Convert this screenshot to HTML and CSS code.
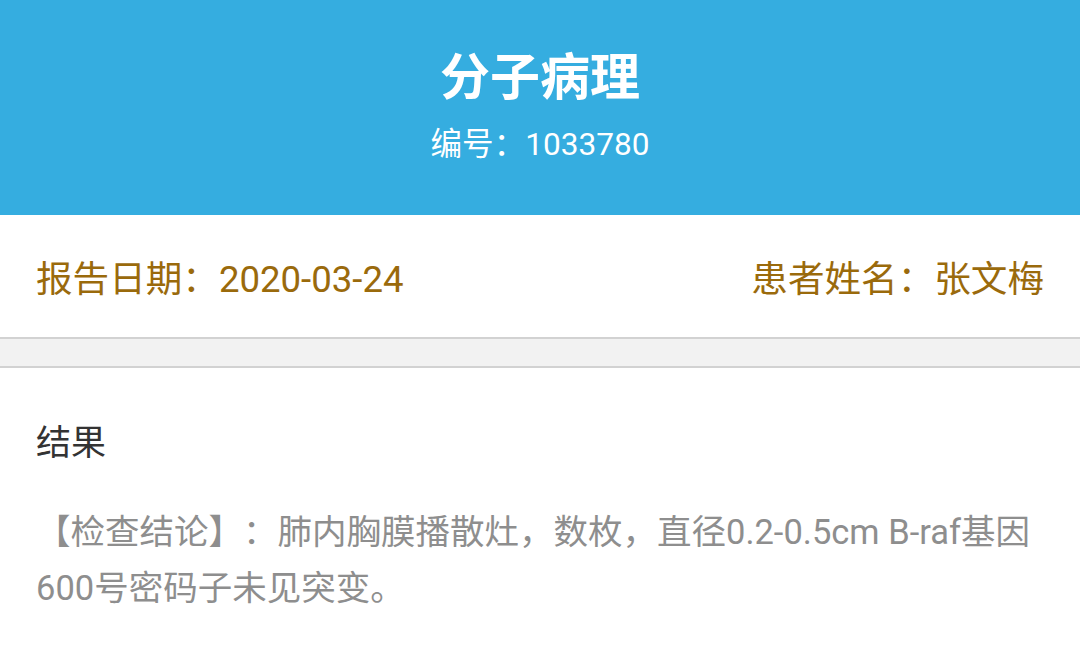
FILE: index.html
```html
<!DOCTYPE html>
<html lang="zh-CN">
<head>
<meta charset="utf-8">
<title>分子病理</title>
<link rel="stylesheet" href="styles.css">
</head>
<body>
  <header class="header">
    <h1 class="title">分子病理</h1>
    <div class="subtitle">编号：1033780</div>
  </header>
  <section class="info">
    <span class="info-item">报告日期：2020-03-24</span>
    <span class="info-item">患者姓名：张文梅</span>
  </section>
  <div class="divider"></div>
  <section class="content">
    <h2 class="section-title">结果</h2>
    <p class="result-text">【检查结论】：肺内胸膜播散灶，数枚，直径0.2-0.5cm B-raf基因600号密码子未见突变。</p>
  </section>
</body>
</html>
```

FILE: styles.css
```css
* {
  box-sizing: border-box;
}

html, body {
  margin: 0;
  padding: 0;
  background: #ffffff;
  font-family: Roboto, "Noto Sans CJK SC", sans-serif;
  text-spacing-trim: space-all;
}

.header {
  background: #35ade0;
  color: #ffffff;
  padding: 48px 0 50px;
  text-align: center;
}

.title {
  margin: 0;
  font-size: 50px;
  font-weight: 700;
  line-height: 60px;
}

.subtitle {
  margin-top: 17px;
  font-size: 31.6px;
  line-height: 40px;
}

.info {
  height: 122px;
  padding: 0 36px;
  display: flex;
  align-items: center;
  justify-content: space-between;
  color: #9a6a0c;
  font-size: 36.6px;
}

.divider {
  height: 31px;
  background: #f2f2f2;
  border-top: 2px solid #d2d2d2;
  border-bottom: 2px solid #d2d2d2;
}

.content {
  padding: 51px 36px 0;
}

.section-title {
  margin: 0;
  font-size: 35px;
  font-weight: 400;
  line-height: 50px;
  color: #333333;
}

.result-text {
  margin: 35px 0 0;
  font-size: 34.5px;
  line-height: 56px;
  color: #8e8e8e;
}
```
